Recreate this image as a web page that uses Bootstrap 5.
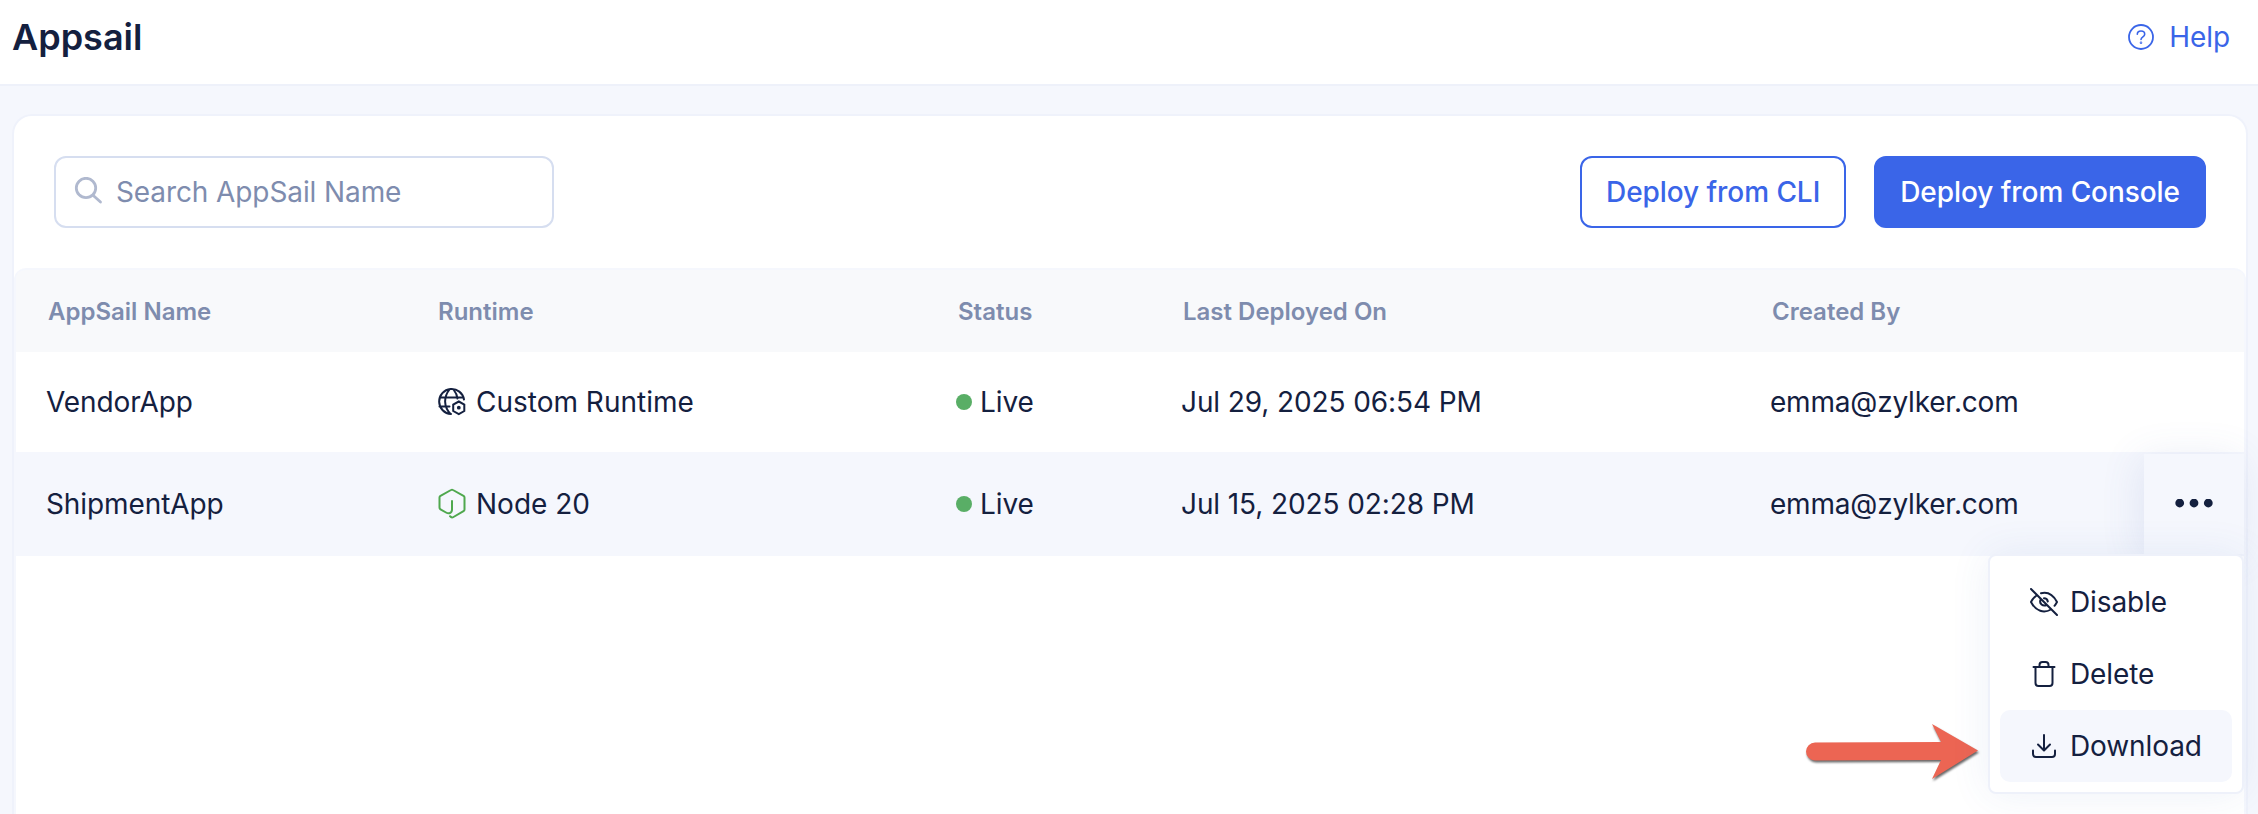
<!DOCTYPE html>
<html lang="en">
<head>
<meta charset="utf-8">
<meta name="viewport" content="width=device-width, initial-scale=1">
<title>Appsail</title>
<link href="https://cdn.jsdelivr.net/npm/bootstrap@5.3.0/dist/css/bootstrap.min.css" rel="stylesheet">
<style>
body{font-family:Inter,"Liberation Sans",sans-serif;font-size:28px;line-height:40px;letter-spacing:-.1px;color:#14203f;background:#f5f7fd;height:814px}
.topbar{height:86px;border-bottom:2px solid #eef1fa;padding:0 28px 10px 12px}
.topbar h1{font-size:36px;font-weight:600;line-height:44px;letter-spacing:0}
.help{color:#3a65e8;gap:15px}
.panel{margin:28px 10px 0 12px;height:700px;background:#fff;border:2px solid #eff2fb;border-bottom:0;border-radius:20px 20px 0 0}
.tools{padding:40px}
.searchbox{width:500px;height:72px;border:2px solid #d6def0;border-radius:12px;padding-left:18px;color:#7e8cae}
.searchbox input{font-size:28px;letter-spacing:-.1px;color:#7e8cae;padding:0;margin-left:12px}
.searchbox input::placeholder{color:#7e8cae;opacity:1}
.act{height:72px;border-radius:12px;border:2px solid #3a65e8;font-size:28px;font-weight:500;line-height:40px;letter-spacing:-.06px;padding:14px 24px;color:#3a65e8;background:#fff}
.act.fill{background:#3a65e8;color:#fff}
.listing{height:546px;border:solid #f5f7fd;border-width:0 2px;border-radius:12px 12px 0 0}
.grid{display:grid;grid-template-columns:390px 520px 225px 589px 1fr;align-items:center;padding-left:30px}
.heads{height:84px;background:#f8f9fb;border-top:2px solid #f5f7fd;border-radius:10px 10px 0 0;font-size:24px;font-weight:600;letter-spacing:0;color:#7e8cae;padding-left:32px;padding-top:2px}
.line{height:100px}
.line.on{height:104px;background:#f5f7fd;position:relative}
.rt{gap:10px;padding-left:2px;letter-spacing:0}
.mail{letter-spacing:-.2px}
.st{gap:8px}
.dot{width:16px;height:16px;border-radius:50%;background:#59ae66}
.more{position:absolute;right:0;top:2px;width:100px;height:100px;background:#f5f7fd;box-shadow:-4px 4px 40px rgba(70,100,170,.12)}
.pop{position:absolute;right:0;top:102px;width:256px;height:240px;background:#fff;border:2px solid #eef1fa;border-radius:8px;padding:10px;box-shadow:0 0 40px rgba(60,100,180,.09)}
.pop a{height:72px;border-radius:10px;padding-left:30px;gap:12px;color:#14203f;text-decoration:none}
.pop a.hot{background:#f5f7fd}
.arrow{position:absolute;left:1779px;top:268px}
svg{display:block;flex:none}
</style>
</head>
<body class="overflow-hidden">
<header class="topbar bg-white d-flex align-items-center justify-content-between">
<h1 class="m-0">Appsail</h1>
<div class="help d-flex align-items-center">
<svg width="26" height="26" viewBox="0 0 26 26" fill="none" stroke="currentColor" stroke-width="1.800" stroke-linecap="round"><circle cx="13" cy="13" r="12"/><path d="M9.300 10.300c0-2 1.600-3.300 3.700-3.300s3.700 1.300 3.700 3.200c0 2.700-3.500 2.600-3.700 5.300" stroke-width="1.600"/><circle cx="13" cy="18.700" r=".4"/></svg>
<span>Help</span></div>
</header>
<main class="panel">
<div class="tools d-flex justify-content-between">
<div class="searchbox d-flex align-items-center">
<svg width="30" height="30" viewBox="0 0 30 30" fill="none" stroke="#b0b9cf" stroke-width="2.800" stroke-linecap="round"><circle cx="12" cy="11" r="9.700"/><path d="M19 18.200 26.500 25"/></svg>
<input class="form-control border-0 bg-transparent shadow-none" placeholder="Search AppSail Name">
</div>
<div class="d-flex" style="gap:28px"><button class="btn act">Deploy from CLI</button><button class="btn act fill">Deploy from Console</button></div>
</div>
<div class="listing">
<div class="grid heads"><div>AppSail Name</div><div>Runtime</div><div>Status</div><div>Last Deployed On</div><div>Created By</div></div>
<div class="grid line"><div>VendorApp</div>
<div class="d-flex align-items-center rt"><svg width="28" height="28" viewBox="0 0 28 28" fill="none" stroke="#14203f" stroke-width="2" stroke-linecap="round"><path d="M26 11.500A12.500 12.500 0 1 0 13 26M3 9.500h22M1.500 18.500h10M11.500 1.500C5.500 9 5.500 18.500 12.500 26M15.500 1.500c2 2.500 3.500 5.500 4 9"/><path d="M20.800 13.500l5.500 3v6.500l-5.500 3.200-5.600-3.200v-6.500z"/><circle cx="20.800" cy="19.700" r=".9" fill="#14203f"/></svg><span>Custom Runtime</span></div>
<div class="d-flex align-items-center st"><i class="dot"></i><span>Live</span></div><div>Jul 29, 2025 06:54 PM</div><div class="mail">emma@zylker.com</div></div>
<div class="grid line on"><div>ShipmentApp</div>
<div class="d-flex align-items-center rt"><svg width="28" height="32" viewBox="0 0 28 32" fill="none" stroke="#4fa84e" stroke-width="2" stroke-linecap="round" stroke-linejoin="round"><path d="M14 13v8.500c0 4-3.500 4.500-6 3l-5.500-3.200q-1-.6-1-1.800V9.500q0-1 1-1.600L13 2q1-.6 2 0l10.500 5.900q1 .6 1 1.600v12q0 1-1 1.600L15.500 29q-2 1.200-3.500-.8"/></svg><span>Node 20</span></div>
<div class="d-flex align-items-center st"><i class="dot"></i><span>Live</span></div><div>Jul 15, 2025 02:28 PM</div><div class="mail">emma@zylker.com</div>
<div class="more d-flex align-items-center justify-content-center"><svg width="38" height="10" viewBox="0 0 38 10" fill="#14203f"><circle cx="4.700" cy="4" r="4.400"/><circle cx="19" cy="4" r="4.400"/><circle cx="33.300" cy="4" r="4.400"/></svg></div>
<svg class="arrow" width="200" height="72" viewBox="0 0 200 72"><path d="M20 22.500 146 22 137 4 183 30.500 137 59 146 40 20 40.500a9 9 0 0 1 0-18z" fill="#ec6553" style="filter:drop-shadow(1px 2px 1px rgba(0,0,0,.6))"/></svg>
<nav class="pop">
<a href="#" class="d-flex align-items-center"><svg width="28" height="28" viewBox="0 0 28 28" fill="none" stroke="#14203f" stroke-width="2" stroke-linecap="round"><path d="M1 1l26 26M11 5.300C18 3.500 23.500 7.500 27 14c-.8 1.500-1.600 2.800-2.500 3.800M6.500 7.500C4 9.300 2.300 11.500 1 14c5 9.500 13 11.500 20 7.500M10.700 11.500c-2 4 2.300 7.500 6 5.300M14 10.200c2 0 3.500 1.500 3.800 3.300"/></svg><span>Disable</span></a>
<a href="#" class="d-flex align-items-center"><svg width="28" height="28" viewBox="0 0 28 28" fill="none" stroke="#14203f" stroke-width="2" stroke-linecap="round"><path d="M3.500 7h21M5.500 7v16q0 3 3 3h11q3 0 3-3V7M9.500 7V5q0-3 3-3h3q3 0 3 3v2"/></svg><span>Delete</span></a>
<a href="#" class="d-flex align-items-center hot"><svg width="28" height="28" viewBox="0 0 28 28" fill="none" stroke="#14203f" stroke-width="2" stroke-linecap="round" stroke-linejoin="round"><path d="M14 3v15M8 12.500l6 6 6-6M3 18.500V22q0 3 3 3h16q3 0 3-3v-3.500"/></svg><span>Download</span></a>
</nav></div>
</div>
</main>
<script src="https://cdn.jsdelivr.net/npm/bootstrap@5.3.0/dist/js/bootstrap.bundle.min.js"></script>
</body>
</html>
